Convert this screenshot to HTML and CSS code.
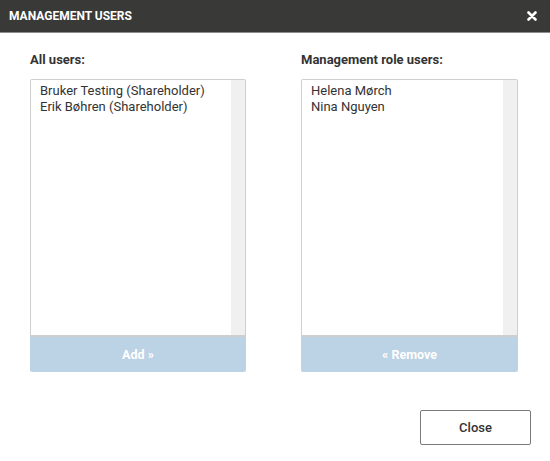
FILE: index.html
```html
<!DOCTYPE html>
<html>
<head>
<meta charset="utf-8">
<link rel="stylesheet" href="styles.css">
</head>
<body>
<div class="dialog">
  <div class="header">
    <span class="title">MANAGEMENT USERS</span>
    <svg class="close-x" width="10" height="10" viewBox="0 0 10 10"><path d="M1.5 1.5 L8.5 8.5 M8.5 1.5 L1.5 8.5" stroke="#fff" stroke-width="2.6" stroke-linecap="round"/></svg>
  </div>
  <div class="content">
    <div class="column">
      <div class="label">All users:</div>
      <div class="listbox">
        <div class="items">
          <div class="item">Bruker Testing (Shareholder)</div>
          <div class="item">Erik Bøhren (Shareholder)</div>
        </div>
        <div class="track"></div>
      </div>
      <button class="move">Add »</button>
    </div>
    <div class="column">
      <div class="label">Management role users:</div>
      <div class="listbox">
        <div class="items">
          <div class="item">Helena Mørch</div>
          <div class="item">Nina Nguyen</div>
        </div>
        <div class="track"></div>
      </div>
      <button class="move">« Remove</button>
    </div>
  </div>
  <div class="footer">
    <button class="close-btn">Close</button>
  </div>
</div>
</body>
</html>
```

FILE: styles.css
```css
* { box-sizing: border-box; }
html, body { margin: 0; padding: 0; background: #fff; }
body { font-family: Roboto, "Liberation Sans", sans-serif; color: #333; }
.dialog { width: 550px; height: 461px; display: flex; flex-direction: column; }
.header {
  height: 33px;
  background: #393a37;
  border-bottom: 1px solid #8d8d8b;
  display: flex;
  align-items: center;
  justify-content: space-between;
  padding: 0 13px 0 9px;
}
.title { color: #fff; font-weight: 700; font-size: 12px; }
.close-x { display: block; margin-top: -1px; }
.content {
  display: grid;
  grid-template-columns: 216px 217px;
  column-gap: 55px;
  padding: 19px 0 0 30px;
}
.label { font-size: 13px; font-weight: 700; color: #333; line-height: 16px; height: 27px; }
.listbox {
  height: 258px;
  border: 1px solid #cfcfcf;
  border-bottom: 2px solid #cfcfcf;
  border-radius: 2px 2px 0 0;
  display: flex;
}
.items { flex: 1; padding: 3px 9px; }
.item { font-size: 13px; line-height: 16px; color: #333; }
.track { width: 14px; background: #f0f0f0; }
.move {
  display: block;
  width: 100%;
  height: 35px;
  border: none;
  border-radius: 0 0 2px 2px;
  background: #bcd2e5;
  color: #fff;
  font-family: Roboto, "Liberation Sans", sans-serif;
  font-weight: 700;
  font-size: 12.5px;
  padding: 0;
}
.footer { display: flex; justify-content: flex-end; padding: 38px 19px 0 0; }
.close-btn {
  width: 111px;
  height: 35px;
  background: #fff;
  border: 1px solid #7a7a7a;
  border-radius: 2px;
  font-family: Roboto, "Liberation Sans", sans-serif;
  font-weight: 500;
  font-size: 13px;
  color: #333;
  padding: 0;
}
```
